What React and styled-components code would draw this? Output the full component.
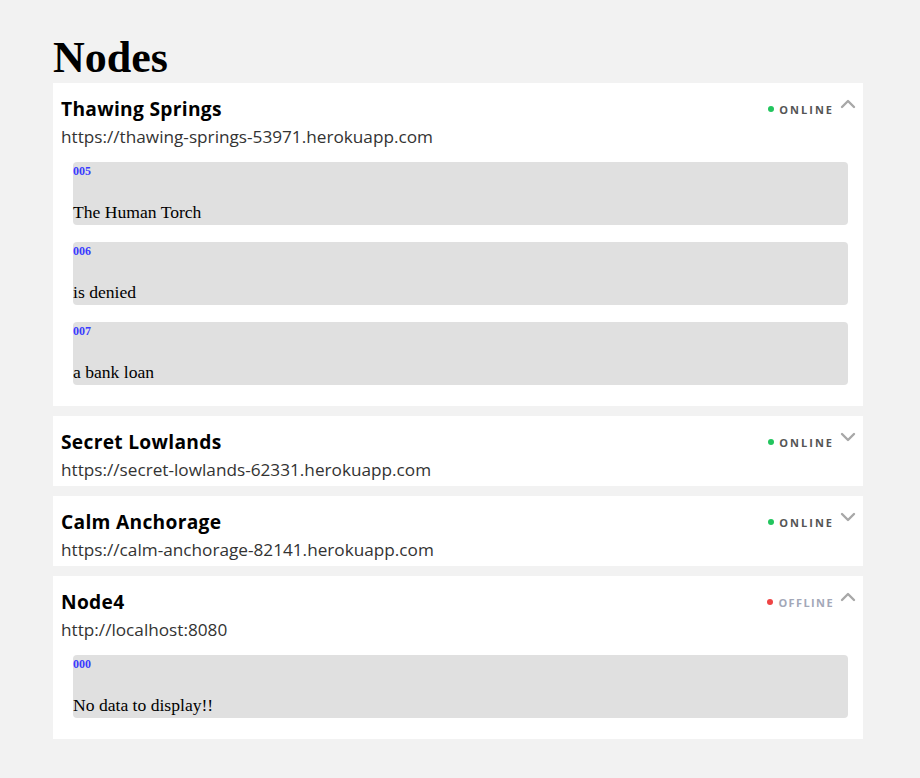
import React from 'react';
import styled, { createGlobalStyle } from 'styled-components';

const GlobalStyle = createGlobalStyle`
  body {
    margin: 0;
    background: #f2f2f2;
    font-family: 'Liberation Serif', serif;
  }
`;

// Page wrapper
const Page = styled.div`
  padding: 32px 0 40px 53px;
`;

const Container = styled.div`
  width: 810px;
`;

const Heading = styled.h1`
  margin: 0;
  font-family: 'Liberation Serif', serif;
  font-size: 44px;
  font-weight: bold;
  color: #000;
`;

const NodeList = styled.div`
  display: flex;
  flex-direction: column;
  gap: 10px;
`;

// One node card
const Card = styled.section`
  background: #fff;
  padding: 14px 8px 5px 8px;
`;

const CardHeader = styled.div`
  display: flex;
  justify-content: space-between;
  align-items: center;
  height: 24px;
`;

const Title = styled.h2`
  margin: 0;
  font-family: 'Open Sans', sans-serif;
  font-size: 19.2px;
  line-height: 24px;
  letter-spacing: 0.3px;
  font-weight: bold;
  color: #000;
`;

const StatusGroup = styled.div`
  display: flex;
  align-items: center;
`;

const Dot = styled.span`
  width: 6px;
  height: 6px;
  border-radius: 50%;
  background: ${(p) => (p.$online ? '#22c55e' : '#ef4444')};
  margin-right: 5px;
`;

const StatusText = styled.span`
  font-family: 'Open Sans', sans-serif;
  font-size: 11px;
  font-weight: bold;
  letter-spacing: ${(p) => (p.$online ? '2px' : '1.4px')};
  color: ${(p) => (p.$online ? '#555' : '#a3a8b8')};
  margin-right: 6px;
`;

const Chevron = styled.svg`
  width: 16px;
  height: 16px;
  margin-bottom: 11px;
  margin-right: -1px;
`;

const Url = styled.div`
  margin-top: 5px;
  font-family: 'Open Sans', sans-serif;
  font-size: 17.2px;
  line-height: 22px;
  color: #333;
`;

const Items = styled.div`
  display: flex;
  flex-direction: column;
  gap: 17px;
  padding: 14px 7px 16px 12px;
`;

const Item = styled.div`
  background: #e0e0e0;
  border-radius: 4px;
  height: 63px;
  box-sizing: border-box;
  padding-top: 2px;
`;

const ItemLabel = styled.div`
  font-family: 'Liberation Serif', serif;
  font-size: 12px;
  line-height: 14px;
  font-weight: bold;
  color: #3b3bff;
`;

const ItemText = styled.p`
  margin: 24px 0 0 0;
  font-family: 'Liberation Serif', serif;
  font-size: 17.6px;
  line-height: 20px;
  color: #000;
`;

const ChevronIcon = ({ up }) => (
  <Chevron viewBox="0 0 16 16" fill="none">
    <path
      d={up ? 'M2 11 L8 5 L14 11' : 'M2 5 L8 11 L14 5'}
      stroke="#a8a8a8"
      strokeWidth="2.4"
      strokeLinecap="round"
      strokeLinejoin="round"
    />
  </Chevron>
);

const nodes = [
  {
    name: 'Thawing Springs',
    url: 'https://thawing-springs-53971.herokuapp.com',
    online: true,
    open: true,
    items: [
      { id: '005', text: 'The Human Torch' },
      { id: '006', text: 'is denied' },
      { id: '007', text: 'a bank loan' },
    ],
  },
  {
    name: 'Secret Lowlands',
    url: 'https://secret-lowlands-62331.herokuapp.com',
    online: true,
    open: false,
    items: [],
  },
  {
    name: 'Calm Anchorage',
    url: 'https://calm-anchorage-82141.herokuapp.com',
    online: true,
    open: false,
    items: [],
  },
  {
    name: 'Node4',
    url: 'http://localhost:8080',
    online: false,
    open: true,
    items: [{ id: '000', text: 'No data to display!!' }],
  },
];

const Node = ({ node }) => (
  <Card>
    <CardHeader>
      <Title>{node.name}</Title>
      <StatusGroup>
        <Dot $online={node.online} />
        <StatusText $online={node.online}>{node.online ? 'ONLINE' : 'OFFLINE'}</StatusText>
        <ChevronIcon up={node.open} />
      </StatusGroup>
    </CardHeader>
    <Url>{node.url}</Url>
    {node.open && (
      <Items>
        {node.items.map((item) => (
          <Item key={item.id}>
            <ItemLabel>{item.id}</ItemLabel>
            <ItemText>{item.text}</ItemText>
          </Item>
        ))}
      </Items>
    )}
  </Card>
);

const App = () => {
  return (
    <>
      <GlobalStyle />
      <Page>
        <Container>
          <Heading>Nodes</Heading>
          <NodeList>
            {nodes.map((node) => (
              <Node key={node.name} node={node} />
            ))}
          </NodeList>
        </Container>
      </Page>
    </>
  );
};

export default App;
